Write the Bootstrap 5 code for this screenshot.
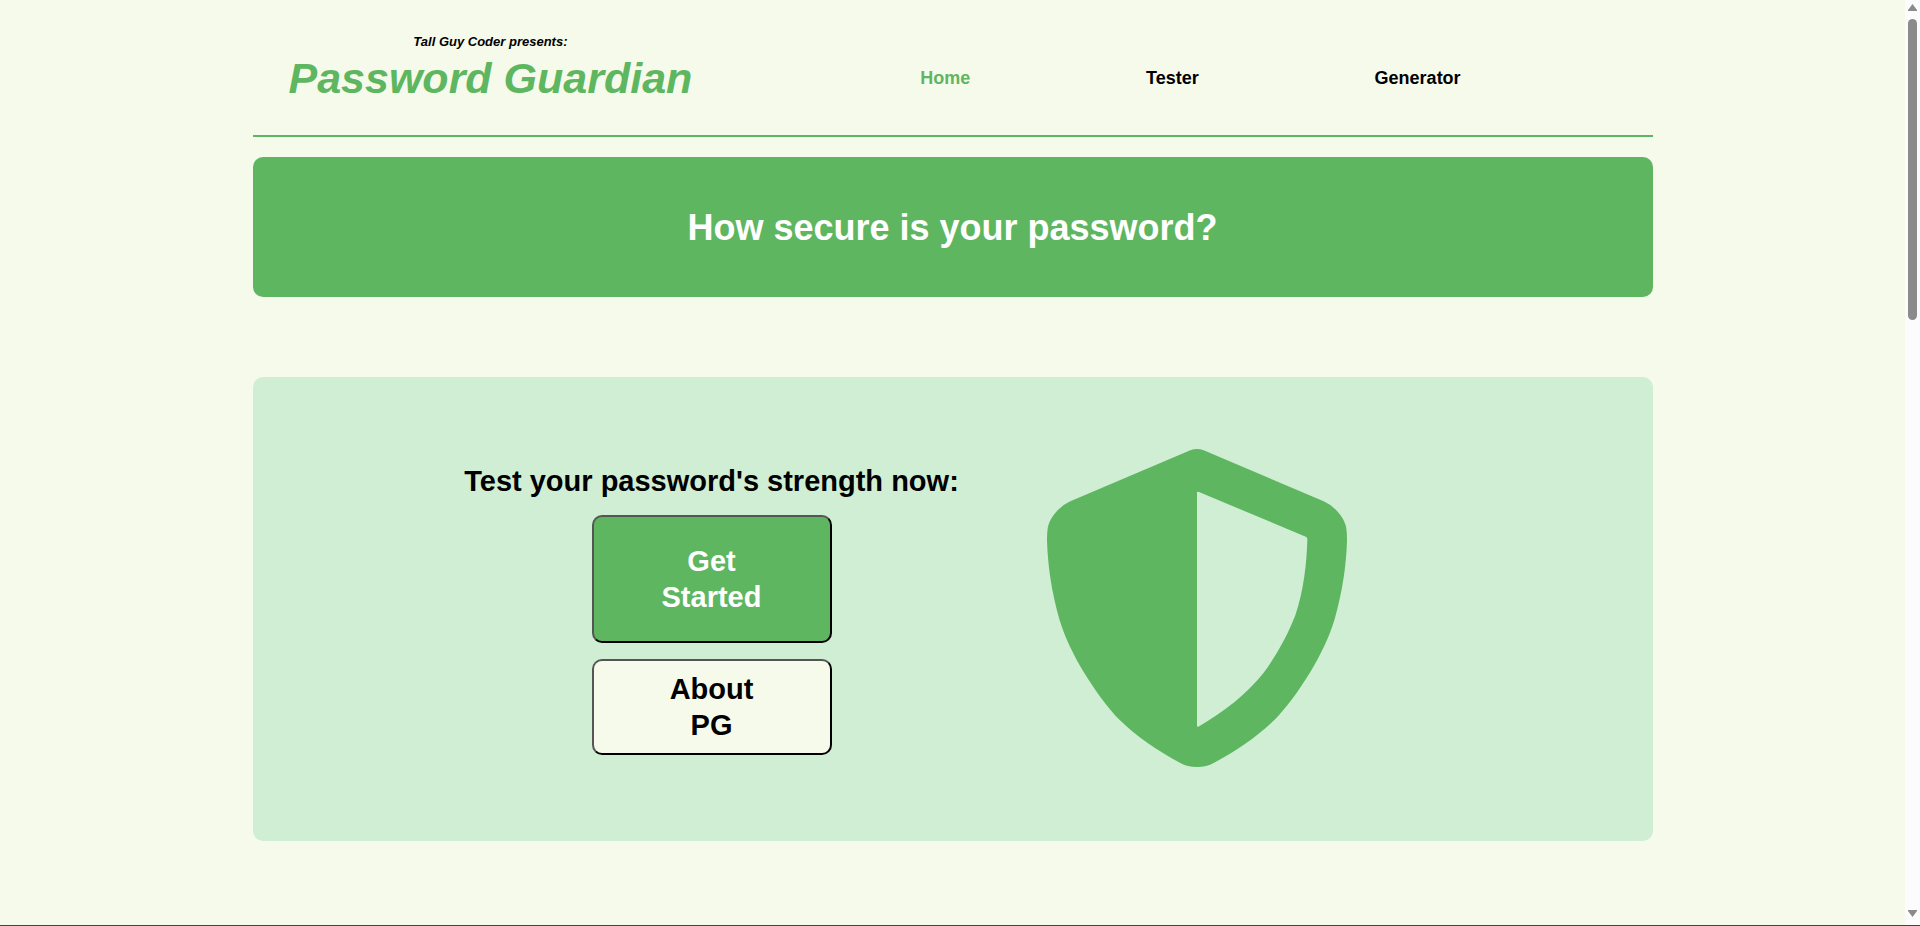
<!DOCTYPE html>
<html lang="en">
<head>
<meta charset="utf-8">
<meta name="viewport" content="width=device-width, initial-scale=1">
<title>Password Guardian</title>
<link href="https://cdn.jsdelivr.net/npm/bootstrap@5.3.0/dist/css/bootstrap.min.css" rel="stylesheet">
<style>
  :root { --pg-green: #5eb660; --pg-cream: #f6faeb; --pg-mint: #d0eed4; }
  body {
    background: var(--pg-cream); color: #000; padding-right: 15px;
    font-family: "Franklin Gothic Medium", "Liberation Sans", Arial, sans-serif; font-weight: 700;
  }
  .pg-page { max-width: 1400px; }
  .pg-header { border-bottom: 2px solid var(--pg-green); padding: 32px 0 31px; margin-bottom: 20px; }
  .pg-brand { padding: 0 36px; font-style: italic; text-align: center; }
  .pg-tagline { font-size: 13px; line-height: 20px; }
  .pg-title { font-size: 43px; line-height: 52px; font-weight: 700; color: var(--pg-green); }
  .pg-nav { padding-top: 20px; }
  .pg-nav a { font-size: 18px; line-height: 24px; color: #000; text-decoration: none; }
  .pg-nav a.active { color: var(--pg-green); }
  .pg-banner { background: var(--pg-green); color: #fff; border-radius: 10px; padding: 49px 16px 47px; margin-bottom: 80px; }
  .pg-banner h2 { font-size: 36px; line-height: 44px; font-weight: 700; }
  .pg-hero { background: var(--pg-mint); border-radius: 10px; padding: 70px 84px 70px 0; gap: 78px; }
  .pg-hero h3 { font-size: 29px; line-height: 36px; font-weight: 700; }
  .pg-btn {
    width: 240px; padding: 10px 64px; font-size: 29px; line-height: 36px; font-weight: 700;
    border: 2px solid #000; border-top-color: #555; border-left-color: #555; border-radius: 10px;
    background: var(--pg-cream); color: #000;
  }
  .pg-btn-main { background: var(--pg-green); color: #fff; padding-top: 26px; padding-bottom: 26px; }
  .pg-shield { width: 320px; height: 320px; fill: var(--pg-green); }
  .pg-rail { width: 15px; background: #fcfcfc; padding: 4px 0 9px; }
  .pg-rail svg { width: 9px; height: 7px; fill: #8b8b8b; }
  .pg-thumb { width: 9px; height: 33%; margin-top: 8px; border-radius: 5px; background: #8b8b8b; }
  .pg-edge { height: 1px; background: #444; z-index: 1040; }
</style>
</head>
<body>
<div class="pg-page mx-auto">
  <header class="pg-header d-flex align-items-center flex-wrap">
    <div class="pg-brand">
      <div class="pg-tagline">Tall Guy Coder presents:</div>
      <h1 class="pg-title mb-0">Password Guardian</h1>
    </div>
    <nav class="pg-nav d-flex flex-grow-1 justify-content-evenly mx-3" aria-label="Main">
      <a class="active" href="#" aria-current="page">Home</a>
      <a href="#tester">Tester</a>
      <a href="#generator">Generator</a>
    </nav>
  </header>
  <main>
    <section class="pg-banner text-center">
      <h2 class="mb-0">How secure is your password?</h2>
    </section>
    <section class="pg-hero d-flex flex-wrap justify-content-center align-items-center">
      <div class="d-flex flex-column align-items-center gap-3 py-3">
        <h3 class="mb-0 text-center">Test your password's strength now:</h3>
        <button type="button" class="pg-btn pg-btn-main">Get Started</button>
        <button type="button" class="pg-btn">About PG</button>
      </div>
      <svg class="pg-shield" viewBox="20 56 960 960" aria-hidden="true"><path fill-rule="evenodd" d="M480 60Q500 52 520 60L880 213Q903 223 922 244Q940 264 946 285Q950 300 950 330C948 400 938 480 912 570C895 625 870 675 840 725C800 790 765 835 735 866C680 920 620 960 550 998Q530 1010 500 1010Q470 1010 450 998C380 960 320 920 265 866C235 835 200 790 160 725C130 675 105 625 88 570C62 480 52 400 50 330Q50 300 54 285Q60 264 78 244Q97 223 120 213ZM500 186Q501 183 506 185L828 320Q831 322 831 328C829 400 820 480 795 555C770 620 735 680 700 727C650 790 580 845 504 889Q501 890 500 887Z"/></svg>
    </section>
  </main>
</div>
<div class="pg-rail position-fixed top-0 end-0 h-100 d-flex flex-column align-items-center" aria-hidden="true">
  <svg viewBox="0 0 9 7" class="flex-shrink-0"><path d="M4.500 0 9 6V7H0V6Z"/></svg>
  <div class="pg-thumb"></div>
  <svg viewBox="0 0 9 7" class="flex-shrink-0 mt-auto"><path d="M0 0H9V1L4.500 7 0 1Z"/></svg>
</div>
<div class="pg-edge position-fixed bottom-0 start-0 w-100"></div>
<script src="https://cdn.jsdelivr.net/npm/bootstrap@5.3.0/dist/js/bootstrap.bundle.min.js"></script>
</body>
</html>
